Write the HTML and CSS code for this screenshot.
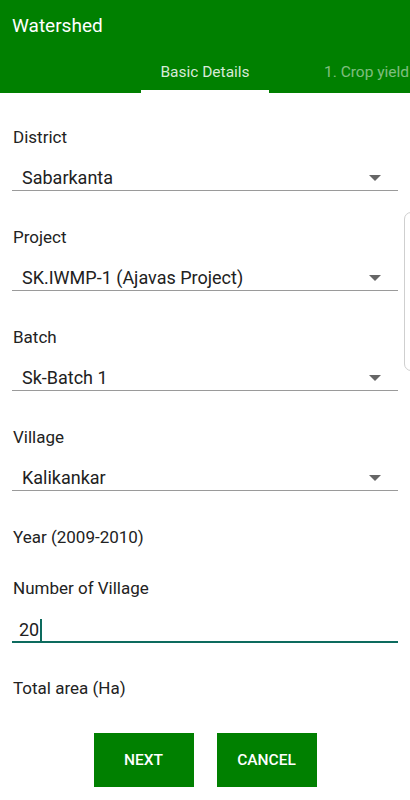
FILE: index.html
```html
<!DOCTYPE html>
<html lang="en">
<head>
    <meta charset="UTF-8">
    <meta name="viewport" content="width=device-width, initial-scale=1.0">
    <title>Watershed</title>
    <link rel="stylesheet" href="styles.css">
</head>
<body>
<div id="app-bar">
    <div class="title">Watershed</div>
    <div class="tabs">
        <div class="tab active">Basic Details</div>
        <div class="tab">1. Crop yield</div>
    </div>
</div>

<div id="form">
    <div class="field">
        <div class="label">District</div>
        <div class="select">
            <span>Sabarkanta</span>
            <span class="arrow"></span>
        </div>
    </div>
    <div class="field">
        <div class="label">Project</div>
        <div class="select">
            <span>SK.IWMP-1 (Ajavas Project)</span>
            <span class="arrow"></span>
        </div>
    </div>
    <div class="field">
        <div class="label">Batch</div>
        <div class="select">
            <span>Sk-Batch 1</span>
            <span class="arrow"></span>
        </div>
    </div>
    <div class="field">
        <div class="label">Village</div>
        <div class="select">
            <span>Kalikankar</span>
            <span class="arrow"></span>
        </div>
    </div>
    <div class="label year">Year (2009-2010)</div>
    <div class="label">Number of Village</div>
    <div class="text-input">
        <span>20</span><span class="cursor"></span>
    </div>
    <div class="label total">Total area (Ha)</div>

    <div class="buttons">
        <button class="btn">NEXT</button>
        <button class="btn">CANCEL</button>
    </div>
</div>

<div id="fast-scroll"></div>
</body>
</html>
```

FILE: styles.css
```css
body, html {
    margin: 0;
    padding: 0;
    font-family: Roboto, "Liberation Sans", sans-serif;
    background: #fff;
    color: #212121;
}

#app-bar {
    background-color: #008000;
    height: 93px;
}

#app-bar .title {
    height: 50px;
    line-height: 52px;
    padding-left: 12px;
    font-size: 19px;
    color: #fff;
}

.tabs {
    display: flex;
    padding-left: 141px;
    height: 43px;
    white-space: nowrap;
    overflow: hidden;
}

.tab {
    font-size: 15.5px;
    height: 40px;
    line-height: 44px;
    color: rgba(255, 255, 255, 0.5);
    padding-left: 55px;
}

.tab.active {
    width: 128px;
    padding-left: 0;
    text-align: center;
    color: rgba(255, 255, 255, 0.85);
    border-bottom: 3px solid #fff;
}

#form {
    padding: 34px 12px 0 12px;
}

.label {
    font-size: 17px;
    line-height: 20px;
    padding-left: 1px;
    color: #222;
}

.field {
    margin-bottom: 36px;
}

.select {
    display: flex;
    justify-content: space-between;
    align-items: center;
    margin-top: 19px;
    height: 24px;
    padding: 0 17px 0 10px;
    font-size: 18px;
    line-height: 24px;
    border-bottom: 1px solid #9a9a9a;
}

.arrow {
    width: 0;
    height: 0;
    border-left: 6px solid transparent;
    border-right: 6px solid transparent;
    border-top: 6px solid #666;
}

.year {
    margin-top: 3px;
    margin-bottom: 31px;
}

.text-input {
    display: flex;
    align-items: center;
    margin-top: 20px;
    height: 23px;
    padding: 0 7px 0 7px;
    font-size: 18px;
    border-bottom: 2px solid #0d6b5e;
}

.cursor {
    width: 2px;
    height: 22px;
    background: #0d6b5e;
    margin-left: 1px;
}

.total {
    margin-top: 35px;
}

.buttons {
    display: flex;
    justify-content: center;
    gap: 23px;
    margin-top: 35px;
}

.btn {
    width: 100px;
    height: 54px;
    border: none;
    background: #008000;
    color: #fff;
    font-family: Roboto, "Liberation Sans", sans-serif;
    font-size: 15.5px;
    font-weight: 500;
}

#fast-scroll {
    position: absolute;
    top: 212px;
    left: 404px;
    width: 20px;
    height: 157px;
    border: 1px solid #cfcfcf;
    border-radius: 7px;
}
```
